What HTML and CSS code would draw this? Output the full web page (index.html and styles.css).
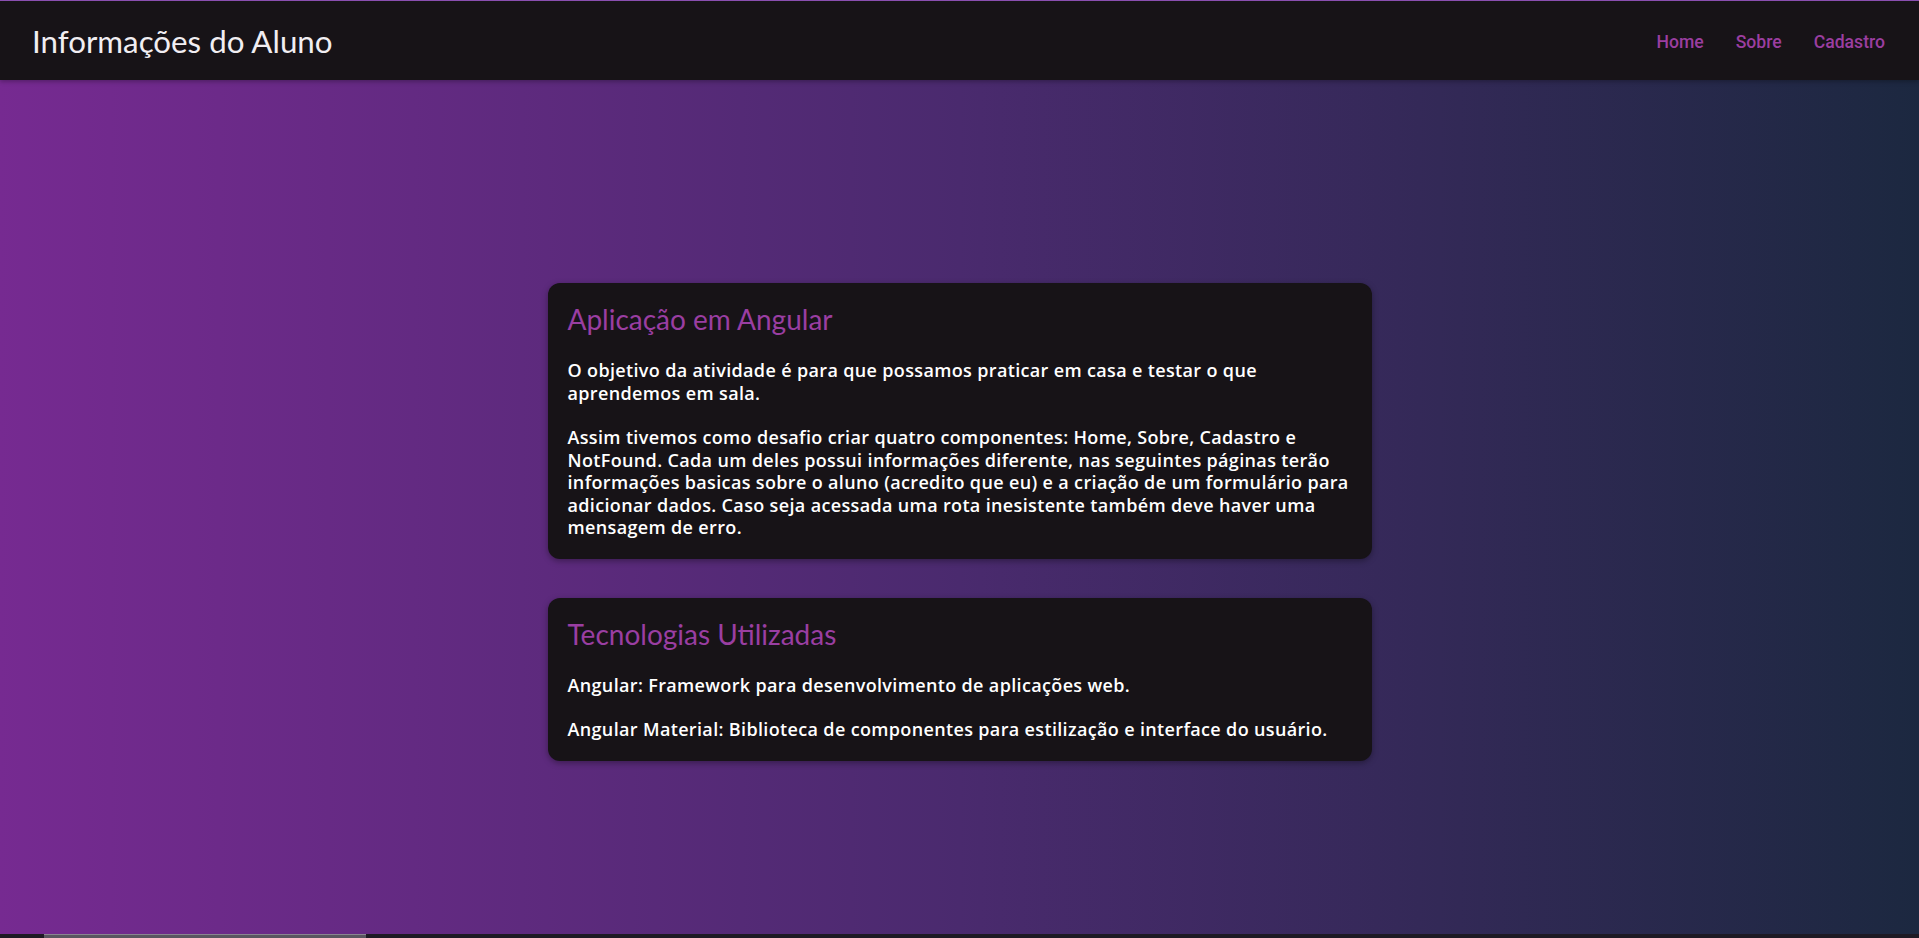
FILE: index.html
```html
<!DOCTYPE html>
<html lang="pt-BR">
<head>
<meta charset="utf-8">
<title>Informações do Aluno</title>
<link rel="stylesheet" href="styles.css">
</head>
<body>
<div class="page">
  <header class="toolbar">
    <span class="brand">Informações do Aluno</span>
    <nav class="nav">
      <a class="nav-link" href="#">Home</a>
      <a class="nav-link" href="#">Sobre</a>
      <a class="nav-link" href="#">Cadastro</a>
    </nav>
  </header>
  <main class="content">
    <section class="card">
      <h2 class="card-title">Aplicação em Angular</h2>
      <p class="card-text">O objetivo da atividade é para que possamos praticar em casa e testar o que aprendemos em sala.</p>
      <p class="card-text">Assim tivemos como desafio criar quatro componentes: Home, Sobre, Cadastro e NotFound. Cada um deles possui informações diferente, nas seguintes páginas terão informações basicas sobre o aluno (acredito que eu) e a criação de um formulário para adicionar dados. Caso seja acessada uma rota inesistente também deve haver uma mensagem de erro.</p>
    </section>
    <section class="card">
      <h2 class="card-title">Tecnologias Utilizadas</h2>
      <p class="card-text">Angular: Framework para desenvolvimento de aplicações web.</p>
      <p class="card-text">Angular Material: Biblioteca de componentes para estilização e interface do usuário.</p>
    </section>
  </main>
  <div class="hscroll"><div class="hscroll-thumb"></div></div>
</div>
</body>
</html>
```
FILE: styles.css
```css
html, body {
  margin: 0;
  padding: 0;
  height: 100%;
}
body {
  font-family: "Lato", "Noto Sans", sans-serif;
  background: #171317;
  overflow: hidden;
}
.page {
  height: 100vh;
  display: flex;
  flex-direction: column;
  background: linear-gradient(to right, #762a91 0%, #4a2a6e 50%, #1c2840 100%);
}
.toolbar {
  flex: 0 0 auto;
  height: 79px;
  border-top: 1px solid #8a4fb0;
  background: #171317;
  display: flex;
  align-items: center;
  justify-content: space-between;
  padding: 0 18px 0 32px;
  box-shadow: 0 2px 4px rgba(0,0,0,0.25);
}
.brand {
  color: #f1eef2;
  font-size: 31.3px;
  font-weight: 400;
}
.nav {
  display: flex;
  align-items: center;
  padding-top: 2px;
}
.nav-link {
  font-family: "Roboto", sans-serif;
  font-weight: 500;
  font-size: 17.6px;
  color: #9b3ea0;
  text-decoration: none;
  padding: 0 16px;
  line-height: 36px;
}
.content {
  flex: 1 1 auto;
  display: flex;
  flex-direction: column;
  align-items: center;
  gap: 39px;
  padding-top: 203px;
}
.card {
  width: 824px;
  box-sizing: border-box;
  background: #171317;
  border-radius: 12px;
  padding: 20px 20px 20px;
  box-shadow: 0 2px 6px rgba(0,0,0,0.35);
}
.card-title {
  margin: 0 0 24px;
  font-size: 28px;
  line-height: 32px;
  font-weight: 400;
  color: #9a3ea2;
}
.card-text {
  margin: 0 0 22px;
  font-family: "Open Sans", "Noto Sans", sans-serif;
  font-size: 18px;
  letter-spacing: 0.35px;
  line-height: 22.5px;
  font-weight: 600;
  color: #ffffff;
}
.card-text:last-child {
  margin-bottom: 0;
}
.hscroll {
  flex: 0 0 4px;
  height: 4px;
  background: #1e1a24;
  position: relative;
}
.hscroll-thumb {
  position: absolute;
  left: 44px;
  top: 0;
  width: 322px;
  height: 4px;
  background: #5a5560;
  border-top: 1px solid #8a8590;
  box-sizing: border-box;
}
```
